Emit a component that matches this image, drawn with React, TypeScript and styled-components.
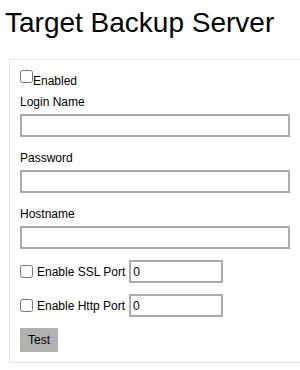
import styled, { createGlobalStyle } from "styled-components";

const GlobalStyle = createGlobalStyle`
html, body {
  margin: 0;
  padding: 0;
  overflow: hidden;
  background: #fff;
}
body {
  font-family: "Liberation Sans", Arial, sans-serif;
  color: #000;
}
`;

const Page = styled.div`
width: 300px;
height: 370px;
`;

const Title = styled.h1`
margin: 0;
padding: 7px 0 0 5px;
font-size: 28px;
line-height: 32px;
font-weight: normal;
`;

// right edge runs off the page in the original, so no right border
const Panel = styled.div`
margin: 20px 0 0 9px;
width: 291px;
border: 1px solid #e2e2e2;
border-right: none;
padding: 9px 10px 10px 10px;
box-sizing: border-box;
font-size: 12px;
`;

const EnabledRow = styled.label`
display: flex;
align-items: flex-start;
height: 19px;
margin-bottom: 7px;
span {
  margin-top: 5px;
  line-height: 14px;
}
`;

const Check = styled.input`
width: 13px;
height: 13px;
margin: 1px 0 0 0;
`;

const FieldLabel = styled.div`
line-height: 15px;
margin-bottom: 4px;
`;

const TextBox = styled.input<{ $w?: number }>`
display: block;
box-sizing: border-box;
width: ${(p) => p.$w ?? 270}px;
height: 23px;
border: 2px solid #ababab;
border-radius: 0;
padding: 0 2px;
font-family: "Liberation Sans", Arial, sans-serif;
font-size: 12px;
outline: none;
`;

const Field = styled.div<{ $last?: boolean }>`
margin-bottom: ${(p) => (p.$last ? 11 : 14)}px;
`;

const PortRow = styled.div`
display: flex;
align-items: center;
height: 23px;
margin-bottom: 11px;
${Check} {
  margin: 0 4px 0 0;
}
${TextBox} {
  margin-left: 4px;
}
`;

const Button = styled.button`
display: block;
width: 38px;
height: 24px;
padding: 0;
border: none;
border-radius: 0;
background: #b1b1b1;
color: #000;
font-family: "Liberation Sans", Arial, sans-serif;
font-size: 12px;
`;

const fields = ["Login Name", "Password", "Hostname"];
const ports = ["Enable SSL Port", "Enable Http Port"];

export default function App() {
  return (
    <Page>
      <GlobalStyle />
      <Title>Target Backup Server</Title>
      <Panel>
        <EnabledRow>
          <Check type="checkbox" />
          <span>Enabled</span>
        </EnabledRow>
        {fields.map((f, i) => (
          <Field key={f} $last={i === fields.length - 1}>
            <FieldLabel>{f}</FieldLabel>
            <TextBox type={f === "Password" ? "password" : "text"} />
          </Field>
        ))}
        {ports.map((p) => (
          <PortRow key={p}>
            <Check type="checkbox" />
            <span>{p}</span>
            <TextBox type="text" $w={94} defaultValue="0" />
          </PortRow>
        ))}
        <Button>Test</Button>
      </Panel>
    </Page>
  );
}
